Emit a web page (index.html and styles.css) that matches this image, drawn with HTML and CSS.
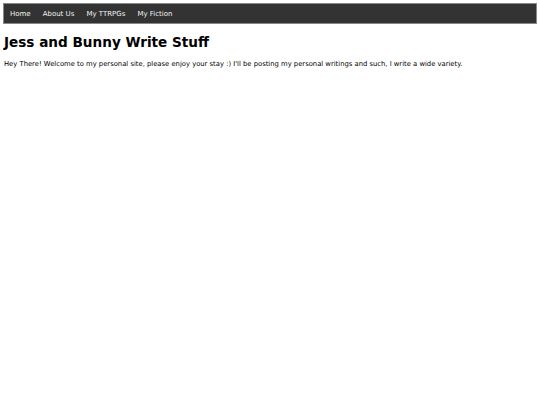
FILE: index.html
```html
<!DOCTYPE html>
<html lang="en">
<head>
  <meta charset="UTF-8">
  <meta name="viewport" content="width=device-width, initial-scale=1.0">
  <title>Jess and Bunny Write Stuff</title>
  <link rel="stylesheet" href="styles.css">
</head>
<body>
  <div class="topnav">
    <a href="#">Home</a>
    <a href="#">About Us</a>
    <a href="#">My TTRPGs</a>
    <a href="#">My Fiction</a>
  </div>
  <h1>Jess and Bunny Write Stuff</h1>
  <p>Hey There! Welcome to my personal site, please enjoy your stay :) I'll be posting my personal writings and such, I write a wide variety.</p>
</body>
</html>
```

FILE: styles.css
```css
/* Main styles */
body {
  margin: 3px 3px;
  font-family: Verdana, "DejaVu Sans", sans-serif;
  color: #000;
}

.topnav {
  display: flex;
  background-color: #333;
  border: 1px solid #888;
}

.topnav a {
  color: #f2f2f2;
  text-decoration: none;
  font-size: 7px;
  padding: 5.5px 6px;
  line-height: 8px;
}

h1 {
  font-size: 13.6px;
  line-height: 16px;
  margin: 10px 0 10px 1px;
}

p {
  font-size: 6.8px;
  margin: 0 0 0 1px;
}
```
